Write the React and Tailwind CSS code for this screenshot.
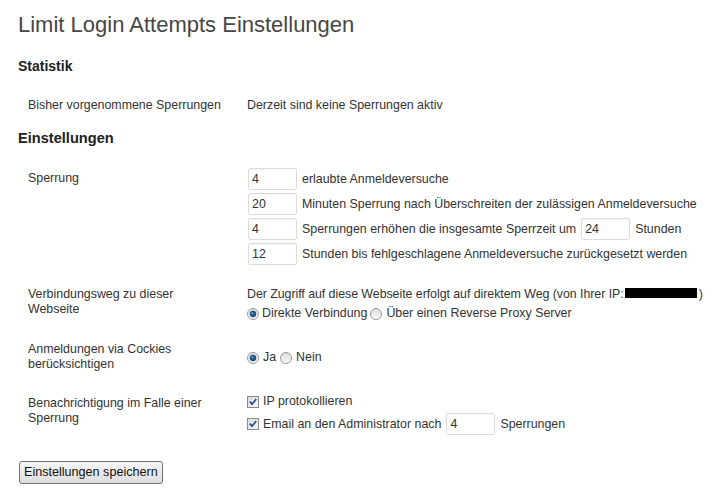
import React from "react";

function Radio({ checked }) {
  return (
    <svg width="12" height="12" viewBox="0 0 12 12" className="shrink-0">
      <defs>
        <linearGradient id={checked ? "rg1" : "rg0"} x1="0" y1="0" x2="0" y2="1">
          <stop offset="0" stopColor="#dcdcdc" />
          <stop offset="1" stopColor="#fafafa" />
        </linearGradient>
      </defs>
      <circle cx="6" cy="6" r="5.5" fill={`url(#${checked ? "rg1" : "rg0"})`} stroke="#9a9a9a" strokeWidth="1" />
      {checked && <circle cx="6" cy="6" r="3" fill="#1f5a8c" stroke="#0f3a60" strokeWidth="0.6" />}
      {checked && <circle cx="5.3" cy="5.2" r="1" fill="#6fa6d6" />}
    </svg>
  );
}

function Check() {
  return (
    <svg width="12" height="12" viewBox="0 0 12 12" className="shrink-0">
      <defs>
        <linearGradient id="cg" x1="0" y1="0" x2="1" y2="1">
          <stop offset="0" stopColor="#d8d8d8" />
          <stop offset="1" stopColor="#fbfbfb" />
        </linearGradient>
      </defs>
      <rect x="0.5" y="0.5" width="11" height="11" fill="url(#cg)" stroke="#8a8a8a" />
      <path d="M2.8 5.6 L5 8.2 L9.2 3" fill="none" stroke="#24508f" strokeWidth="1.8" />
    </svg>
  );
}

function Field({ value, className = "" }) {
  return (
    <div
      className={`w-[49px] h-[22px] border border-[#dcdcdc] rounded-[2px] bg-white pl-[3px] flex items-center text-[#333] shrink-0 shadow-[inset_0_1px_1px_rgba(0,0,0,0.04)] ${className}`}
    >
      {value}
    </div>
  );
}

export default function App() {
  return (
    <div className="w-[727px] h-[494px] bg-white overflow-hidden pl-[18px] font-['Liberation_Sans',Arial,sans-serif] text-[12.4px] leading-[15px] text-[#333]">
      <h2 className="pt-[10px] text-[22px] leading-[30px] text-[#464646] font-normal">
        Limit Login Attempts Einstellungen
      </h2>

      <h3 className="mt-[17px] text-[14px] leading-[18px] font-bold text-[#222]">Statistik</h3>

      <div className="mt-[23px] flex">
        <div className="w-[229px] pl-[10px]">Bisher vorgenommene Sperrungen</div>
        <div>Derzeit sind keine Sperrungen aktiv</div>
      </div>

      <h3 className="mt-[16px] text-[14.6px] leading-[18px] font-bold text-[#222]">Einstellungen</h3>

      <div className="mt-[21px] flex items-start">
        <div className="w-[229px] pl-[10px] pt-[3px]">Sperrung</div>
        <div className="flex flex-col gap-[3px]">
          <div className="flex items-center h-[22px]">
            <Field value="4" className="ml-[1px]" />
            <span className="ml-[5px]">erlaubte Anmeldeversuche</span>
          </div>
          <div className="flex items-center h-[22px]">
            <Field value="20" className="ml-[1px]" />
            <span className="ml-[5px]">Minuten Sperrung nach Überschreiten der zulässigen Anmeldeversuche</span>
          </div>
          <div className="flex items-center h-[22px]">
            <Field value="4" className="ml-[1px]" />
            <span className="ml-[5px]">Sperrungen erhöhen die insgesamte Sperrzeit um</span>
            <Field value="24" className="ml-[5px]" />
            <span className="ml-[5px]">Stunden</span>
          </div>
          <div className="flex items-center h-[22px]">
            <Field value="12" className="ml-[1px]" />
            <span className="ml-[5px]">Stunden bis fehlgeschlagene Anmeldeversuche zurückgesetzt werden</span>
          </div>
        </div>
      </div>

      <div className="mt-[22px] flex items-start">
        <div className="w-[229px] pl-[10px] pr-[40px]">Verbindungsweg zu dieser Webseite</div>
        <div className="flex flex-col">
          <div className="flex items-baseline">
            <span className="tracking-[-0.05px]">Der Zugriff auf diese Webseite erfolgt auf direktem Weg (von Ihrer IP:</span>
            <span className="inline-block w-[72px] h-[10px] bg-black ml-[1px] mr-[2px]"></span>
            <span>)</span>
          </div>
          <div className="mt-[4px] flex items-center h-[15px]">
            <Radio checked />
            <span className="ml-[3px]">Direkte Verbindung</span>
            <span className="ml-[3px]"><Radio /></span>
            <span className="ml-[4px]">Über einen Reverse Proxy Server</span>
          </div>
        </div>
      </div>

      <div className="mt-[21px] flex items-start">
        <div className="w-[229px] pl-[10px] pr-[60px]">Anmeldungen via Cockies berücksichtigen</div>
        <div className="pt-[8px] flex items-center h-[23px]">
          <Radio checked />
          <span className="ml-[4px]">Ja</span>
          <span className="ml-[4px]"><Radio /></span>
          <span className="ml-[4px]">Nein</span>
        </div>
      </div>

      <div className="mt-[22px] flex items-start">
        <div className="w-[229px] pl-[10px] pt-[2px] pr-[20px]">Benachrichtigung im Falle einer Sperrung</div>
        <div className="flex flex-col">
          <div className="flex items-center h-[15px]">
            <Check />
            <span className="ml-[4px]">IP protokollieren</span>
          </div>
          <div className="mt-[4px] flex items-center h-[22px]">
            <Check />
            <span className="ml-[4px]">Email an den Administrator nach</span>
            <Field value="4" className="ml-[5px]" />
            <span className="ml-[5px]">Sperrungen</span>
          </div>
        </div>
      </div>

      <button className="mt-[26px] ml-[1px] h-[23px] px-[4px] border border-[#707070] rounded-[3px] bg-gradient-to-b from-[#f6f6f6] to-[#dddddd] text-[12.6px] leading-[21px] text-[#111]">
        Einstellungen speichern
      </button>
    </div>
  );
}
